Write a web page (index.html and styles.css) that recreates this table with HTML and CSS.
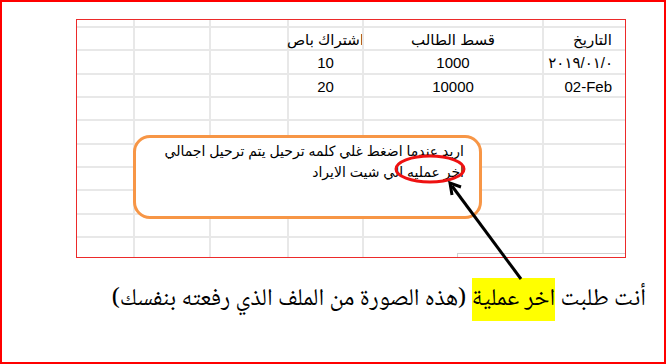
FILE: index.html
```html
<!DOCTYPE html>
<html lang="ar">
<head>
<meta charset="utf-8">
<title>Sheet</title>
<link rel="stylesheet" href="styles.css">
</head>
<body>
<div class="frame">
  <div class="sheet">
    <div class="grid">
      <div class="cell"></div><div class="cell"></div><div class="cell"></div><div class="cell"></div><div class="cell"></div><div class="cell"></div>

      <div class="cell"></div><div class="cell"></div><div class="cell"></div>
      <div class="cell center">اشتراك باص</div>
      <div class="cell center">قسط الطالب</div>
      <div class="cell right">التاريخ</div>

      <div class="cell"></div><div class="cell"></div><div class="cell"></div>
      <div class="cell center">10</div>
      <div class="cell center">1000</div>
      <div class="cell right date">٢٠١٩/٠١/٠</div>

      <div class="cell"></div><div class="cell"></div><div class="cell"></div>
      <div class="cell center">20</div>
      <div class="cell center">10000</div>
      <div class="cell right">02-Feb</div>

      <div class="cell"></div><div class="cell"></div><div class="cell"></div><div class="cell"></div><div class="cell"></div><div class="cell"></div>
      <div class="cell"></div><div class="cell"></div><div class="cell"></div><div class="cell"></div><div class="cell"></div><div class="cell"></div>
      <div class="cell"></div><div class="cell"></div><div class="cell"></div><div class="cell"></div><div class="cell"></div><div class="cell"></div>
      <div class="cell"></div><div class="cell"></div><div class="cell"></div><div class="cell"></div><div class="cell"></div><div class="cell"></div>
      <div class="cell"></div><div class="cell"></div><div class="cell"></div><div class="cell"></div><div class="cell"></div><div class="cell"></div>
      <div class="cell"></div><div class="cell"></div><div class="cell"></div><div class="cell"></div><div class="cell"></div><div class="cell"></div>
      <div class="cell"></div><div class="cell"></div><div class="cell"></div><div class="cell"></div><div class="cell"></div><div class="cell"></div>
    </div>
    <div class="scrollbar"></div>
  </div>

  <div class="callout">
    <p>اريد عندما اضغط غلي كلمه ترحيل يتم ترحيل اجمالي<br>اخر عمليه الي شيت الايراد</p>
  </div>

  <p class="note">أنت طلبت <span class="hl">اخر عملية</span> (هذه الصورة من الملف الذي رفعته بنفسك)</p>

  <svg class="annot" viewBox="2 2 662 360" width="662" height="360" aria-hidden="true">
    <ellipse cx="430" cy="169" rx="34" ry="13" fill="none" stroke="#ee1111" stroke-width="3"/>
    <line x1="452" y1="186" x2="521" y2="279" stroke="#000" stroke-width="3"/>
    <polyline points="461,187 450,183 452,195" fill="none" stroke="#000" stroke-width="3" stroke-linejoin="miter"/>
  </svg>
</div>
</body>
</html>
```

FILE: styles.css
```css
html, body {
  margin: 0;
  padding: 0;
  background: #ffffff;
}

.frame {
  position: relative;
  box-sizing: border-box;
  width: 666px;
  height: 364px;
  border: 2px solid #ff0000;
  overflow: hidden;
}

.sheet {
  position: relative;
  box-sizing: border-box;
  width: 550px;
  height: 239px;
  margin: 17px 0 0 74px;
  border: 1px solid #ec2a2a;
  overflow: hidden;
}

.grid {
  display: grid;
  grid-template-columns: 56px 76px 78px 75px 180px 83px;
  grid-template-rows: 6px repeat(10, 23.33px);
  font-family: "Liberation Sans", "DejaVu Sans", sans-serif;
  font-size: 15px;
  color: #000;
}

.cell {
  box-sizing: border-box;
  border-left: 2px solid #e8e8e8;
  border-top: 2px solid #e8e8e8;
  padding-top: 2px;
  line-height: 20px;
  white-space: nowrap;
}

.grid .cell:nth-child(6n+1) {
  border-left: none;
}

.grid .cell:nth-child(-n+6) {
  border-top: none;
}

.center {
  text-align: center;
  display: flex;
  justify-content: center;
}

.right {
  text-align: right;
  padding-right: 13px;
}

.date {
  direction: ltr;
  unicode-bidi: bidi-override;
  padding-right: 12px;
  overflow: hidden;
}

.scrollbar {
  position: absolute;
  left: 380px;
  right: 0;
  bottom: 0;
  height: 3px;
  border-top: 1px solid #d0d0d0;
  border-left: 1px solid #d0d0d0;
  background: #fff;
}

.callout {
  position: absolute;
  left: 131px;
  top: 133px;
  box-sizing: border-box;
  width: 349px;
  height: 84px;
  border: 3px solid #f79646;
  border-radius: 17px;
  background: #ffffff;
  padding: 3px 15px 0 4px;
}

.callout p {
  margin: 0;
  direction: rtl;
  text-align: right;
  white-space: nowrap;
  font-family: "Liberation Sans", "DejaVu Sans", sans-serif;
  font-size: 14px;
  line-height: 21px;
  color: #000;
}

.note {
  margin: 20px 0 0 0;
  padding-right: 18px;
  direction: rtl;
  text-align: right;
  font-family: "Noto Naskh Arabic", "Liberation Serif", "DejaVu Serif", serif;
  font-size: 24px;
  line-height: 43px;
  color: #000;
}

.hl {
  display: inline-block;
  background: #ffff00;
  height: 43px;
}

.annot {
  position: absolute;
  left: 0;
  top: 0;
  pointer-events: none;
}
```
